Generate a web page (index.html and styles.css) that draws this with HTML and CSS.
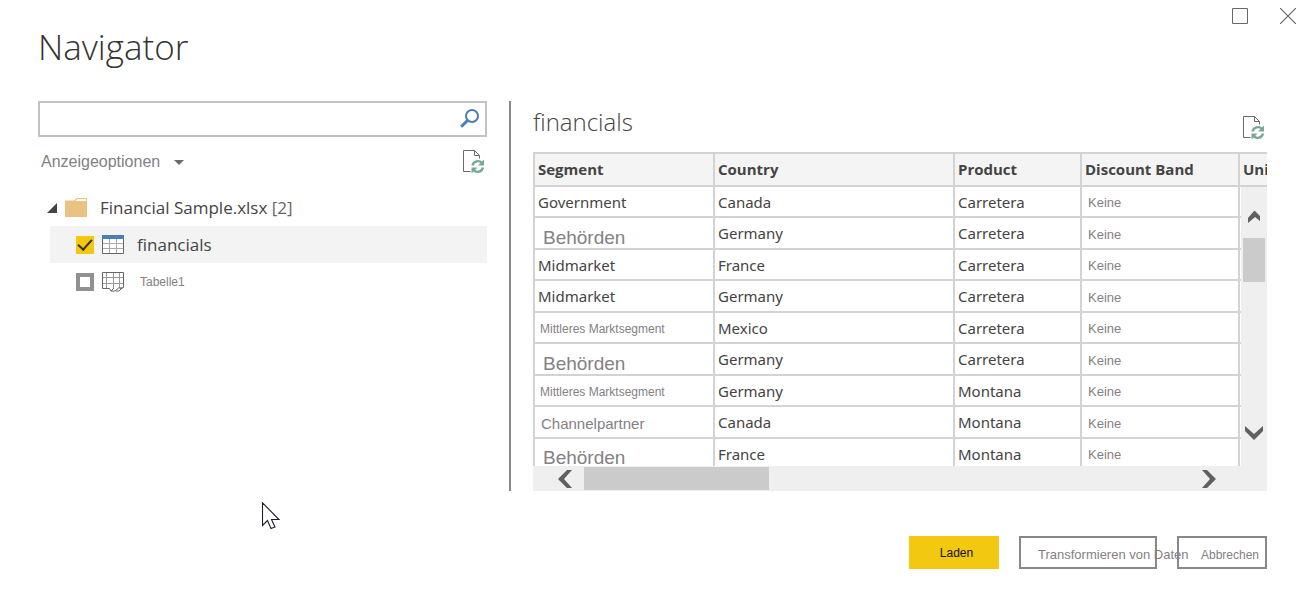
FILE: index.html
```html
<!DOCTYPE html>
<html lang="de">
<head>
<meta charset="utf-8">
<title>Navigator</title>
<link rel="stylesheet" href="styles.css">
</head>
<body>
<svg class="symbols" aria-hidden="true">
  <symbol id="refresh" viewBox="0 0 22 24">
    <path d="M7.500 21.500H.5V.5h11l5 5v3M11.500 .5v5h5" fill="none" stroke="#6b6b6b"/>
    <g fill="none" stroke="#78a894" stroke-width="2.400">
      <path d="M9.500 15.500a5.500 5.500 0 0 1 9.500-2.500"/>
      <path d="M20 17.500a5.500 5.500 0 0 1-9.500 2.500"/>
    </g>
    <path d="M21 9.500v6h-6zM8.500 23.500v-6h6z" fill="#78a894"/>
  </symbol>
</svg>
<div class="dialog">
  <header class="header">
    <h1 class="title">Navigator</h1>
    <div class="window-controls">
      <button class="icon-button" type="button" aria-label="Maximieren">
        <svg width="16" height="16" viewBox="0 0 16 16"><path d="M.5 .5h15v15H.5z" fill="none" stroke="#666"/></svg>
      </button>
      <button class="icon-button" type="button" aria-label="Schließen">
        <svg width="16" height="16" viewBox="0 0 16 16"><path d="M0 0l16 16M16 0L0 16" fill="none" stroke="#666" stroke-width="1.200"/></svg>
      </button>
    </div>
  </header>

  <main class="content">
    <section class="sources">
      <div class="search">
        <input class="search-input" type="text" aria-label="Suchen">
        <button class="icon-button" type="button" aria-label="Suche starten">
          <svg width="20" height="20" viewBox="0 0 20 20" fill="none" stroke="#4a7ebb"><circle cx="12" cy="7" r="6" stroke-width="2"/><path d="M7.500 11.500L1.200 17.800" stroke-width="3"/></svg>
        </button>
      </div>
      <div class="options">
        <button class="options-button" type="button">Anzeigeoptionen
          <svg width="10" height="5" viewBox="0 0 10 5"><path d="M0 0h10L5 5z" fill="#6b6b6b"/></svg>
        </button>
        <button class="icon-button" type="button" aria-label="Aktualisieren"><svg width="22" height="24"><use href="#refresh"/></svg></button>
      </div>
      <ul class="tree">
        <li class="file">
          <svg width="10" height="10" viewBox="0 0 10 10"><path d="M10 0v10H0z" fill="#444"/></svg>
          <svg class="folder" width="22" height="19" viewBox="0 0 22 19"><path d="M0 2.500h9L11.500 0H22v19H0z" fill="#eac282"/><path d="M12.300 1H21v2H10.500z" fill="#fff"/></svg>
          <span>Financial Sample.xlsx <span class="count">[2]</span></span>
        </li>
        <li>
          <label class="item item-selected">
            <input class="check" type="checkbox" checked>
            <svg width="22" height="20" viewBox="0 0 22 20"><path d="M.5 3v15.500h21V3z" fill="#fff"/><path d="M7.500 4v14M14.500 4v14M1 8.500h20M1 13.500h20" fill="none" stroke="#aaa"/><path d="M.5 3v15.500h21V3" fill="none" stroke="#666"/><path d="M0 0h22v4H0z" fill="#4a7ebb"/></svg>
            <span>financials</span>
          </label>
        </li>
        <li>
          <label class="item">
            <input class="check" type="checkbox">
            <svg width="22" height="20" viewBox="0 0 22 20"><path d="M4.500 1v15M11.500 1v15M17.500 1v15M1 5.500h20M1 11.500h20" fill="none" stroke="#999"/><path d="M7.500 16.500H.5V.5h21v15l-3.500 1M7.500 16.500l1.500 2.500h4l3.500-3h4M9 19l3-3M14 19h3l3-3" fill="none" stroke="#666"/></svg>
            <span class="sheet-name">Tabelle1</span>
          </label>
        </li>
      </ul>
    </section>

    <div class="divider"></div>

    <section class="preview">
      <div class="preview-head">
        <h2 class="preview-title">financials</h2>
        <button class="icon-button" type="button" aria-label="Vorschau aktualisieren"><svg width="22" height="24"><use href="#refresh"/></svg></button>
      </div>
      <div class="grid-frame">
        <div class="grid-view">
          <table class="grid">
            <colgroup><col class="c-segment"><col class="c-country"><col class="c-product"><col class="c-band"><col class="c-units"></colgroup>
            <thead><tr><th>Segment</th><th>Country</th><th>Product</th><th>Discount Band</th><th>Uni</th></tr></thead>
            <tbody>
              <tr><td>Government</td><td>Canada</td><td>Carretera</td><td class="band">Keine</td><td></td></tr>
              <tr><td class="large">Behörden</td><td>Germany</td><td>Carretera</td><td class="band">Keine</td><td></td></tr>
              <tr><td>Midmarket</td><td>France</td><td>Carretera</td><td class="band">Keine</td><td></td></tr>
              <tr><td>Midmarket</td><td>Germany</td><td>Carretera</td><td class="band">Keine</td><td></td></tr>
              <tr><td class="small">Mittleres Marktsegment</td><td>Mexico</td><td>Carretera</td><td class="band">Keine</td><td></td></tr>
              <tr><td class="large">Behörden</td><td>Germany</td><td>Carretera</td><td class="band">Keine</td><td></td></tr>
              <tr><td class="small">Mittleres Marktsegment</td><td>Germany</td><td>Montana</td><td class="band">Keine</td><td></td></tr>
              <tr><td class="medium">Channelpartner</td><td>Canada</td><td>Montana</td><td class="band">Keine</td><td></td></tr>
              <tr><td class="large">Behörden</td><td>France</td><td>Montana</td><td class="band">Keine</td><td></td></tr>
            </tbody>
          </table>
          <div class="scroll-v">
            <button class="icon-button" type="button" aria-label="Nach oben"><svg width="12" height="12" viewBox="0 0 12 12"><path d="M0 12V7l6-7h1l5 5v5L7 6z" fill="#606060"/></svg></button>
            <div class="thumb-v"></div>
            <button class="icon-button scroll-down" type="button" aria-label="Nach unten"><svg width="18" height="14" viewBox="0 0 18 14"><path d="M0 0l9 8 9-8v5l-9 9-9-9z" fill="#606060"/></svg></button>
          </div>
        </div>
        <div class="scroll-h">
          <button class="icon-button" type="button" aria-label="Nach links"><svg width="14" height="18" viewBox="0 0 14 18"><path d="M14 0H9L0 9l9 9h5L6 9z" fill="#606060"/></svg></button>
          <div class="thumb-h"></div>
          <button class="icon-button scroll-right" type="button" aria-label="Nach rechts"><svg width="14" height="18" viewBox="0 0 14 18"><path d="M0 0h5l9 9-9 9H0l8-9z" fill="#606060"/></svg></button>
        </div>
      </div>
    </section>
  </main>

  <footer class="actions">
    <button class="button button-primary" type="button">Laden</button>
    <button class="button button-wide" type="button">Transformieren von Daten</button>
    <button class="button button-cancel" type="button">Abbrechen</button>
  </footer>

  <svg class="pointer" width="18" height="28" viewBox="0 0 18 28" aria-hidden="true"><path d="M.5 .8v22.700l5-5 3.500 8 4-1.500-3.500-7.500H17z" fill="#fff" stroke="#1c1c2c" stroke-width="1.100"/></svg>
</div>
</body>
</html>
```
FILE: styles.css
```css
* {
  box-sizing: border-box;
}

body {
  margin: 0;
  background: #fff;
  color: #444;
  font-family: "Open Sans", "Noto Sans", sans-serif;
  font-size: 15px;
}

button {
  margin: 0;
  padding: 0;
  border: 0;
  background: none;
  font-family: "Liberation Sans", Arial, sans-serif;
}

.symbols {
  position: absolute;
  width: 0;
  height: 0;
}

.dialog {
  position: relative;
  min-height: 100vh;
}

.header {
  display: flex;
  justify-content: space-between;
  align-items: flex-start;
  padding: 8px 3px 0 38px;
  height: 101px;
}

.title {
  margin: 15px 0 0;
  font-size: 35px;
  line-height: 48px;
  font-weight: 300;
  color: #333;
}

.window-controls {
  display: flex;
  gap: 32px;
}

.icon-button {
  display: block;
  flex: none;
}

.icon-button svg {
  display: block;
}

.content {
  display: grid;
  grid-template-columns: minmax(0, 449fr) 2px minmax(0, 734fr);
  gap: 22px;
  padding: 0 32px 0 38px;
}

.divider {
  background: #888;
}

.search {
  display: flex;
  align-items: center;
  height: 36px;
  padding-right: 5px;
  border: 2px solid #c3c3c3;
}

.search-input {
  flex: 1;
  min-width: 0;
  height: 100%;
  padding: 0 8px;
  border: 0;
  outline: 0;
  font: inherit;
}

.options {
  display: flex;
  justify-content: space-between;
  align-items: center;
  height: 50px;
  padding: 0 2px 0 3px;
}

.options-button {
  display: flex;
  align-items: center;
  gap: 14px;
  color: #848084;
  font-size: 16px;
}

.tree {
  margin: 2px 0 0;
  padding: 0 0 0 12px;
  list-style: none;
  font-size: 17px;
}

.file {
  display: flex;
  align-items: center;
  height: 37px;
  margin-left: -3px;
}

.folder {
  margin: 0 13px 0 8px;
}

.count {
  color: #666;
}

.item {
  display: flex;
  align-items: center;
  gap: 8px;
  height: 37px;
  padding-left: 26px;
}

.item span {
  padding-left: 5px;
}

.item-selected {
  background: #f3f3f3;
}

.item .sheet-name {
  padding-left: 8px;
  color: #848084;
  font: 12px "Liberation Sans", Arial, sans-serif;
}

.check {
  appearance: none;
  width: 18px;
  height: 18px;
  margin: 0;
  border: 4px solid #919191;
  background: #fff;
}

.check:checked {
  display: grid;
  place-items: center;
  border: 0;
  background: #f2c811;
}

.check:checked::before {
  content: "";
  width: 6px;
  height: 12px;
  margin-bottom: 3px;
  border: solid #333;
  border-width: 0 2px 2px 0;
  transform: rotate(42deg);
}

.preview-head {
  display: flex;
  justify-content: space-between;
  align-items: flex-start;
  height: 51px;
  padding-right: 2px;
}

.preview-title {
  margin: 5px 0 0;
  font-size: 24px;
  line-height: 32px;
  font-weight: 300;
}

.preview-head .icon-button {
  margin-top: 15px;
}

.grid-view {
  position: relative;
  height: 314px;
  overflow: hidden;
}

.grid {
  width: 100%;
  min-width: 734px;
  table-layout: fixed;
  border-collapse: separate;
  border-spacing: 0;
  border-top: 2px solid #d3d3d3;
  border-left: 2px solid #d3d3d3;
}

.c-segment {
  width: 180px;
}

.c-product {
  width: 127px;
}

.c-band {
  width: 158px;
}

.c-units {
  width: 27px;
}

.grid th,
.grid td {
  height: 31px;
  padding: 0 3px;
  border-right: 2px solid #d3d3d3;
  border-bottom: 2px solid #d3d3d3;
  line-height: 20px;
  text-align: left;
  white-space: nowrap;
  overflow: hidden;
}

.grid td {
  font-family: "Noto Sans", "Open Sans", sans-serif;
}

.grid tr:nth-child(even) td {
  height: 32px;
}

.grid thead th {
  height: 33px;
  padding-bottom: 2px;
  background: #f4f4f4;
}

.grid th:last-child {
  border-right: 0;
  padding-right: 0;
}

.grid .band,
.grid .small,
.grid .medium,
.grid .large {
  color: #848084;
  font-family: "Liberation Sans", Arial, sans-serif;
}

.grid .band {
  padding-top: 3px;
  padding-left: 6px;
  font-size: 13px;
}

.grid .small {
  padding-top: 2px;
  padding-left: 5px;
  font-size: 12px;
}

.grid .medium {
  padding-top: 4px;
  padding-left: 6px;
  font-size: 15px;
}

.grid .large {
  padding-top: 9px;
  padding-left: 8px;
  font-size: 19px;
}

.scroll-v {
  position: absolute;
  top: 35px;
  right: 0;
  bottom: 0;
  width: 26px;
  display: flex;
  flex-direction: column;
  align-items: center;
  padding: 24px 0 26px;
  background: #efefef;
}

.thumb-v {
  width: 22px;
  height: 44px;
  margin-top: 15px;
  background: #cbcbcb;
}

.scroll-down {
  margin-top: auto;
}

.scroll-h {
  display: flex;
  align-items: center;
  height: 25px;
  padding: 0 51px 0 25px;
  background: #efefef;
}

.thumb-h {
  width: 185px;
  height: 23px;
  margin-left: 12px;
  background: #cbcbcb;
}

.scroll-right {
  margin-left: auto;
}

.actions {
  display: flex;
  justify-content: flex-end;
  gap: 20px;
  padding: 45px 32px 30px;
}

.button {
  width: 90px;
  height: 33px;
  border: 2px solid #888;
  color: #848084;
  font-size: 12px;
  text-align: left;
  white-space: nowrap;
}

.button-primary {
  padding-left: 5px;
  border-color: #f2c811;
  background: #f2c811;
  color: #111;
  text-align: center;
}

.button-wide {
  width: 138px;
  padding: 4px 0 0 17px;
  font-size: 13px;
}

.button-cancel {
  padding: 4px 0 0 22px;
}

.pointer {
  position: absolute;
  top: 502px;
  left: 262px;
}
```
